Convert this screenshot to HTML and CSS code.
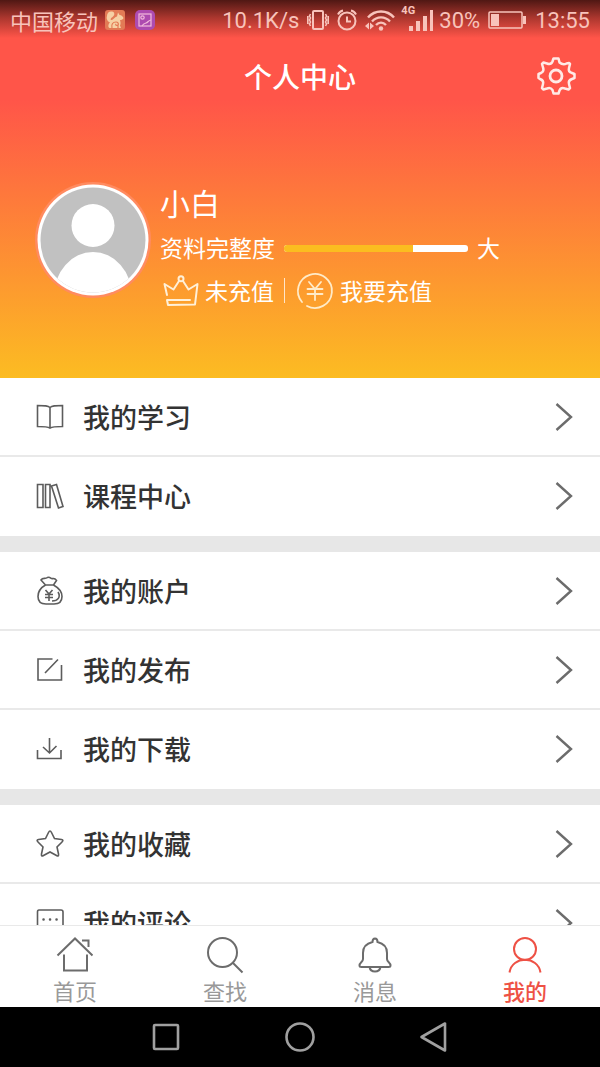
FILE: index.html
```html
<!DOCTYPE html>
<html lang="zh-CN">
<head>
<meta charset="utf-8">
<meta name="viewport" content="width=device-width, initial-scale=1">
<title>个人中心</title>
<link rel="stylesheet" href="styles.css">
</head>
<body>
<svg class="defs" aria-hidden="true">
  <symbol id="chevron" viewBox="0 0 20 32"><path d="M2.500 3 17 16 2.500 29"/></symbol>
</svg>
<div class="app">
  <header class="hero">
    <div class="status">
      <span class="carrier">中国移动</span>
      <svg class="app-icon" viewBox="0 0 20 20" aria-hidden="true">
        <rect width="20" height="20" rx="3" fill="#e37a55"/>
        <path fill="#f6d0a4" d="M2 6C2 3 4 1 7 1.500c3 .5 3 4 .5 5.500C5 8.500 5 10.500 7 10c2-1.500 3-3 5-3.500L13 2.500l1.500 2.500c2 0 3.500 1.500 4 3-.5 1.500-2 2-3.500 2 .5 2 1 4 0 5.500l1 2.500H4.500c-2-1.500-1-4 .5-5.500C2.500 11.500 1 8.500 2 6z"/>
        <path fill="none" stroke="#e37a55" stroke-width="1.200" d="M7 18c-1-4 1-6 4-6 2 0 3 2 2 3s-3 0-2-1M13 15v3"/>
      </svg>
      <svg class="app-icon second" viewBox="0 0 20 20" aria-hidden="true">
        <rect width="20" height="20" rx="5" fill="#ad4bb0"/>
        <g fill="none" stroke="#f3b9dc" stroke-width="1.200"><rect x="4" y="4" width="12" height="12"/><circle cx="7.500" cy="7.500" r="1.700"/><path d="M7 16c1-2 2-2.500 4-3s2-2.500 5-3"/></g>
      </svg>
      <span class="speed">10.1K/s</span>
      <svg class="s-vibrate" viewBox="0 0 22 20" aria-hidden="true"><g fill="none" stroke="currentColor"><rect x="6" y="1" width="10" height="18" rx="1" stroke-width="2"/><path stroke-width="1.600" d="M3.500 4 2.500 6l1 2-1 2 1 2-1 2 1 2M.8 6v8M18.500 4l1 2-1 2 1 2-1 2 1 2-1 2M21.200 6v8"/></g></svg>
      <svg class="s-alarm" viewBox="0 0 20 22" aria-hidden="true"><g fill="none" stroke="currentColor" stroke-width="2"><circle cx="10" cy="12" r="8.500"/><path d="M10 7.500V12.500h4M1 5.500C2 3.500 3.500 2 6 1.500M19 5.500C18 3.500 16.500 2 14 1.500"/></g></svg>
      <svg class="s-wifi" viewBox="0 0 32 22" aria-hidden="true"><g fill="none" stroke="currentColor" stroke-width="2.400"><path d="M4 8.500c7-8 19-8 26 0M8 12.500c5-5.500 13-5.500 18 0M12 16c3-3 7-3 10 0"/></g><circle cx="17" cy="19.500" r="2.200" fill="currentColor"/><path fill="currentColor" d="M1 17l4-3.500v7zM10 17l-4-3.500v7z"/></svg>
      <span class="signal"><span class="net">4G</span>
        <svg class="s-bars" viewBox="0 0 25 22" aria-hidden="true"><path fill="currentColor" d="M0 17h4v5H0zM7 12h4v10H7zM14 7h4v15h-4zM21 1h3v21h-3z"/></svg></span>
      <span class="percent">30%</span>
      <svg class="s-battery" viewBox="0 0 38 18" aria-hidden="true"><rect x="1" y="1" width="33" height="16" rx="1" fill="none" stroke="currentColor" stroke-width="1.500"/><path fill="currentColor" d="M3 3h8v12H3zM35 5h3v8h-3z"/></svg>
      <time class="clock">13:55</time>
    </div>
    <div class="titlebar">
      <h1>个人中心</h1>
      <button class="settings" type="button" aria-label="设置">
        <svg viewBox="0 0 38 38" aria-hidden="true"><g fill="none" stroke="#ffeae6" stroke-linejoin="round"><circle cx="19" cy="19" r="6" stroke-width="2.800"/><path stroke-width="2.500" d="M16.500 1.500h5l1 4q3.500 3 7 1l2.500-.5 1 1-1 4q-1 4 3 5l2.500 1v4l-2.500 1q-4 1.500-3 5l1 4-1.500 1.500-3.500-1q-4-1.500-5.500 2l-1 3h-5l-1-3.500q-2-3-5.500-1.500l-3.500 1L5 31l1-4q1-3.500-3-5l-1.500-1v-4L4 16q3.500-2 2-5.500L5 7l1.500-1.500 3.500 1q4 1.500 5.500-2z"/></g></svg>
      </button>
    </div>
    <section class="profile">
      <svg class="avatar" viewBox="0 0 116 116" role="img" aria-label="头像">
        <defs><clipPath id="face"><circle cx="58" cy="58" r="52.500"/></clipPath></defs>
        <circle cx="58" cy="58" r="58" fill="#ff8b60"/>
        <circle cx="58" cy="58" r="55.500" fill="#fff"/>
        <g clip-path="url(#face)"><rect width="116" height="116" fill="#c1c1c1"/><circle cx="58" cy="43.500" r="21.500" fill="#fff"/><ellipse cx="58" cy="114" rx="39" ry="44" fill="#fff"/></g>
      </svg>
      <div class="info">
        <h2 class="name">小白</h2>
        <div class="line">
          <label for="complete">资料完整度</label>
          <progress id="complete" value="70" max="100"></progress>
          <span>大</span>
        </div>
        <div class="line pay">
          <svg class="crown" viewBox="0 0 36 32" aria-hidden="true"><g fill="none" stroke="#fff0d8" stroke-width="2" stroke-linejoin="round" stroke-linecap="round"><path d="M4 20 1.500 9l9 5.500L16 6M20 6l5.500 8.500L34.500 9 32 29.500 5 30 4 25h23"/><circle cx="18" cy="3.800" r="2.500"/></g></svg>
          <a href="#vip">未充值</a>
          <span class="bar"></span>
          <svg class="coin" viewBox="0 0 38 38" aria-hidden="true"><g fill="none" stroke="#ffebc8" stroke-width="1.800" stroke-linecap="round"><path d="M6 30A17 17 0 1 1 11 34"/><path d="m13 10 6 7 6-7M11.500 17h15M11.500 22h15M19 17v11"/></g></svg>
          <a href="#recharge">我要充值</a>
        </div>
      </div>
    </section>
  </header>

  <main class="menu">
    <nav class="group">
      <a class="row" href="#study"><svg class="icon" viewBox="0 0 28 28"><path d="M14 4.500C12 2.500 9 2.500 1.500 2.500v21c6 0 10 0 12.500 1.500 2.500-1.500 6.500-1.500 12.500-1.500v-21C19 2.500 16 2.500 14 4.500V25"/></svg><span>我的学习</span><svg class="chevron"><use href="#chevron"/></svg></a>
      <a class="row" href="#course"><svg class="icon" viewBox="0 0 28 28"><path d="M1.500 2.500H7v23H1.500zM9.500 2.500H14v23H9.500zM15.500 4l5-1.500 6.500 22-4.500 1.500z"/></svg><span>课程中心</span><svg class="chevron"><use href="#chevron"/></svg></a>
    </nav>
    <nav class="group">
      <a class="row" href="#account"><svg class="icon" viewBox="0 0 28 28"><path d="M9.500 8 5 3C7 0 9 2.500 11.500.5c2-1 3 .5 4 1 2 .5 3-1 5 2L17.500 8zM9.500 8C5 10.500 2 14.500 2 19.500c0 5 3 7.500 8 7.500h8c5 0 8-2.500 8-7.500 0-5-4-9-8.500-11.500M9.500 13l3.500 4 3.500-4M13 17v7M9 17.500H17M9 20.500H17M22 15c3 5 0 9-6 9"/></svg><span>我的账户</span><svg class="chevron"><use href="#chevron"/></svg></a>
      <a class="row" href="#publish"><svg class="icon" viewBox="0 0 28 28"><path d="M16.500 3H2v21h23.500V9M9 17 22 3.500"/></svg><span>我的发布</span><svg class="chevron"><use href="#chevron"/></svg></a>
      <a class="row" href="#download"><svg class="icon" viewBox="0 0 28 28"><path d="M13.500 3v15M7 12l6.500 6 7-7M1.500 15v8.500H25V15"/></svg><span>我的下载</span><svg class="chevron"><use href="#chevron"/></svg></a>
    </nav>
    <nav class="group">
      <a class="row" href="#favorite"><svg class="icon" viewBox="0 0 28 28"><path d="M12.500 2.500q1.500-3 3 0l3 6 7 1q2.500.5.500 2.500l-5 5 1.500 7q.5 3-2 1.500L14 22l-6.500 3.500q-2.500 1.500-2-1.500L7 17l-5-5q-2-2 .5-2.500l7-1z"/></svg><span>我的收藏</span><svg class="chevron"><use href="#chevron"/></svg></a>
      <a class="row" href="#comment"><svg class="icon" viewBox="0 0 28 28"><path d="M3 1h22q2 0 2 2v20H14l-5 4v-4H1.500V3q0-2 1.500-2z"/><path class="dots" d="M7.500 10.500h.1M14 10.500h.1M20.500 10.500h.1"/></svg><span>我的评论</span><svg class="chevron"><use href="#chevron"/></svg></a>
    </nav>
  </main>

  <nav class="tabs">
    <a class="tab" href="#home"><svg viewBox="0 0 38 38"><path d="M1.500 19.500 19 2.500l17.500 17M8 18.500V34.500h23V18.500M26 4.500h6.500V11"/></svg><span>首页</span></a>
    <a class="tab" href="#search"><svg viewBox="0 0 38 38"><circle cx="16.500" cy="16.500" r="14.500"/><path d="m27 27 9.500 9.500"/></svg><span>查找</span></a>
    <a class="tab" href="#message"><svg viewBox="0 0 38 38"><path d="M16.500 6q0-3.500 2.500-3.500T21.500 6C28 7.500 31 11 31 17v6c0 3 3.500 3.500 3.500 6.500 0 1-1 1.500-2 1.500h-27c-1 0-2-.5-2-1.500C3.500 26.500 7 26 7 23v-6c0-6 3-9.500 9.500-11zM13.500 31c1 6 10 6 11 0"/></svg><span>消息</span></a>
    <a class="tab active" href="#mine" aria-current="page"><svg viewBox="0 0 38 38"><circle cx="19" cy="13" r="11"/><path d="M3.500 36.500C6 19.500 32 19.500 34.500 36.500"/></svg><span>我的</span></a>
  </nav>
  <div class="system">
    <button type="button" aria-label="最近任务"><svg viewBox="0 0 32 32"><rect x="4" y="4" width="24" height="24" rx="1"/></svg></button>
    <button type="button" aria-label="主屏幕"><svg viewBox="0 0 32 32"><circle cx="16" cy="16" r="13.500"/></svg></button>
    <button type="button" aria-label="返回"><svg viewBox="0 0 32 32"><path d="M3.500 16 27 2.500v27z"/></svg></button>
  </div>
</div>
</body>
</html>
```

FILE: styles.css
```css
* { box-sizing: border-box; }
body {
  margin: 0;
  font-family: Roboto, "Noto Sans CJK SC", sans-serif;
  color: #333;
  background: #fff;
}
a { color: inherit; text-decoration: none; }
button { padding: 0; border: 0; background: none; }
svg { display: block; flex: none; overflow: visible; }
h1, h2 { margin: 0; font-weight: 400; }
.defs { position: absolute; width: 0; height: 0; }

.app { display: flex; flex-direction: column; height: 100vh; overflow: hidden; }

.hero {
  flex: none;
  padding-bottom: 64px;
  color: #fff;
  background:
    linear-gradient(rgba(55, 15, 12, .88), rgba(90, 25, 20, .5) 18px, rgba(255, 85, 73, 0) 38px),
    linear-gradient(#ff5549 100px, #fcbc22);
}

.status {
  display: flex;
  align-items: center;
  height: 40px;
  padding: 0 10px;
  font-size: 22px;
  color: #f8c3bb;
}
.app-icon { width: 20px; height: 20px; margin-left: 7px; }
.app-icon.second { margin-left: 10px; }
.speed { margin-left: auto; }
.s-vibrate { width: 22px; height: 20px; margin-left: 8px; }
.s-alarm { width: 20px; height: 22px; margin-left: 8px; }
.s-wifi { width: 32px; height: 22px; margin-left: 7px; }
.signal { display: flex; align-items: center; margin-left: 5px; }
.net { width: 8px; padding-bottom: 18px; font-size: 11px; font-weight: 700; line-height: 12px; }
.s-bars { width: 25px; height: 22px; }
.percent { margin-left: 5px; }
.s-battery { width: 38px; height: 18px; margin-left: 8px; }
.clock { margin-left: 9px; }

.titlebar {
  display: grid;
  grid-template-columns: 1fr auto 1fr;
  align-items: center;
  height: 72px;
  padding: 0 25px;
}
.titlebar h1 { grid-column: 2; padding-top: 5px; font-size: 28px; font-weight: 500; line-height: 40px; }
.settings { justify-self: end; }
.settings svg { width: 38px; height: 38px; }

.profile { display: flex; gap: 9px; padding: 70px 35px 0; }
.avatar { width: 116px; height: 116px; }
.info { flex: 1; font-size: 23px; line-height: 43px; }
.name { font-size: 30px; line-height: 46px; }
.line { display: flex; align-items: center; }
progress {
  appearance: none;
  width: 184px;
  height: 7px;
  margin: 0 9px 3px 9px;
  border: 0;
  border-radius: 3px;
  overflow: hidden;
  background: #fff;
}
progress::-webkit-progress-bar { background: #fff; }
progress::-webkit-progress-value { background: #fbbd20; }
progress::-moz-progress-bar { background: #fbbd20; }
.crown { width: 36px; height: 32px; margin: 0 6px 4px 3px; }
.bar { width: 1px; height: 25px; margin: 0 11px 4px 10px; background: #ffe5c8; }
.coin { width: 38px; height: 38px; margin: 0 6px 4px 0; }

.menu { flex: 1; min-height: 0; overflow: hidden; }
.group + .group { border-top: 16px solid #e7e7e7; }
.row {
  display: flex;
  align-items: center;
  height: 79px;
  padding: 0 26px 0 36px;
  font-size: 27px;
  font-weight: 500;
  border-bottom: 2px solid #e9e9e9;
}
.row:last-child { border-bottom-color: transparent; }
.row span { flex: 1; margin-left: 19px; }
.icon { width: 28px; height: 28px; fill: none; stroke: #5c5c5c; stroke-width: 1.6; }
.icon .dots { stroke-width: 2.5; stroke-linecap: round; }
.chevron { width: 20px; height: 32px; fill: none; stroke: #6c6c6c; stroke-width: 2.4; }

.tabs {
  flex: none;
  display: grid;
  grid-template-columns: repeat(4, 1fr);
  height: 82px;
  border-top: 1px solid #e9e9e9;
  background: #fff;
}
.tab {
  display: flex;
  flex-direction: column;
  align-items: center;
  padding-top: 10px;
  font-size: 22px;
  line-height: 38px;
  color: #999;
}
.tab svg { width: 38px; height: 38px; fill: none; stroke: #6c6c6c; stroke-width: 2; }
.tab.active { color: #ee5145; }
.tab.active span { font-weight: 500; }
.tab.active svg { stroke: #ee5145; }

.system {
  flex: none;
  display: flex;
  justify-content: center;
  align-items: center;
  gap: 17%;
  height: 60px;
  background: #000;
}
.system svg { width: 32px; height: 32px; fill: none; stroke: #a0a0a0; stroke-width: 2.6; stroke-linejoin: round; }
```
